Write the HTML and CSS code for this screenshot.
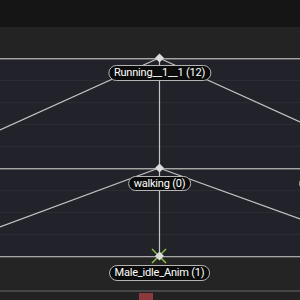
FILE: index.html
```html
<!DOCTYPE html>
<html>
<head>
<meta charset="utf-8">
<link rel="stylesheet" href="styles.css">
</head>
<body>
<div class="editor">
  <div class="topbar"></div>
  <div class="header"></div>
  <div class="lane lane-a"></div>
  <div class="lane lane-b"></div>
  <div class="footer"></div>
  <div class="scrollbar"><div class="thumb"></div></div>

  <svg class="wires" width="300" height="300" viewBox="0 0 300 300">
    <g stroke="#c4c4c4" stroke-width="1.2" fill="none">
      <line x1="159" y1="58" x2="0" y2="130"/>
      <line x1="159" y1="58" x2="300" y2="122"/>
      <line x1="159.5" y1="58" x2="159.5" y2="256"/>
      <line x1="159" y1="168" x2="0" y2="227"/>
      <line x1="159" y1="168" x2="300" y2="219"/>
    </g>
    <g stroke="#8cc63f" stroke-width="1.4">
      <line x1="152" y1="249" x2="166" y2="263"/>
      <line x1="166" y1="249" x2="152" y2="263"/>
    </g>
    <g fill="#dcdcdc">
      <polygon points="159.5,53.5 164,58 159.5,62.5 155,58"/>
      <polygon points="159.5,163.5 164,168 159.5,172.5 155,168"/>
      <polygon points="159.5,251.5 164,256 159.5,260.5 155,256"/>
    </g>
  </svg>

  <div class="node node-running">Running__1__1 (12)</div>
  <div class="node node-walking">walking (0)</div>
  <div class="node node-idle">Male_idle_Anim (1)</div>
  <div class="node node-edge"></div>
</div>
</body>
</html>
```
FILE: styles.css
```css
html, body {
  margin: 0;
  padding: 0;
  background: #151515;
}

.editor {
  position: relative;
  width: 300px;
  height: 300px;
  overflow: hidden;
  display: flex;
  flex-direction: column;
  font-family: Roboto, "Noto Sans", "Liberation Sans", sans-serif;
}

.topbar {
  height: 27px;
  background: #151515;
  flex: none;
}

.header {
  height: 31px;
  background: #232323;
  flex: none;
}

.lane {
  flex: none;
  background:
    linear-gradient(to bottom, #a6a6a6 0 1px, #5c5c5c 1px 2px) top / 100% 2px no-repeat,
    repeating-linear-gradient(to bottom, #2b2c33 0 1px, #22232a 1px 22px);
}

.lane-a { height: 110px; }
.lane-b { height: 88px; }

.footer {
  height: 34px;
  flex: none;
  background:
    linear-gradient(to bottom, #a6a6a6 0 1px, #4a4a4a 1px 2px) top / 100% 2px no-repeat,
    #242424;
}

.scrollbar {
  flex: 1;
  background: linear-gradient(to bottom, #464646 0 2px, #222222 2px);
  position: relative;
  display: flex;
  padding-left: 139px;
  padding-top: 3px;
}

.thumb {
  width: 14px;
  background: #8a3a3c;
}

.wires {
  position: absolute;
  left: 0;
  top: 0;
}

.node {
  position: absolute;
  left: 159.5px;
  transform: translateX(-50%);
  box-sizing: border-box;
  height: 16px;
  padding: 0 5px;
  border: 1px solid #b4b4b4;
  border-radius: 9px;
  background: #0b0b0b;
  color: #ffffff;
  font-size: 11px;
  line-height: 14px;
  letter-spacing: -0.2px;
  white-space: nowrap;
}

.node-running { top: 65px; }
.node-walking { top: 176px; height: 15px; line-height: 13px; }
.node-idle { top: 265px; }

.node-edge {
  left: 299px;
  transform: none;
  top: 177px;
  width: 20px;
  height: 13px;
  padding: 0;
}
```
